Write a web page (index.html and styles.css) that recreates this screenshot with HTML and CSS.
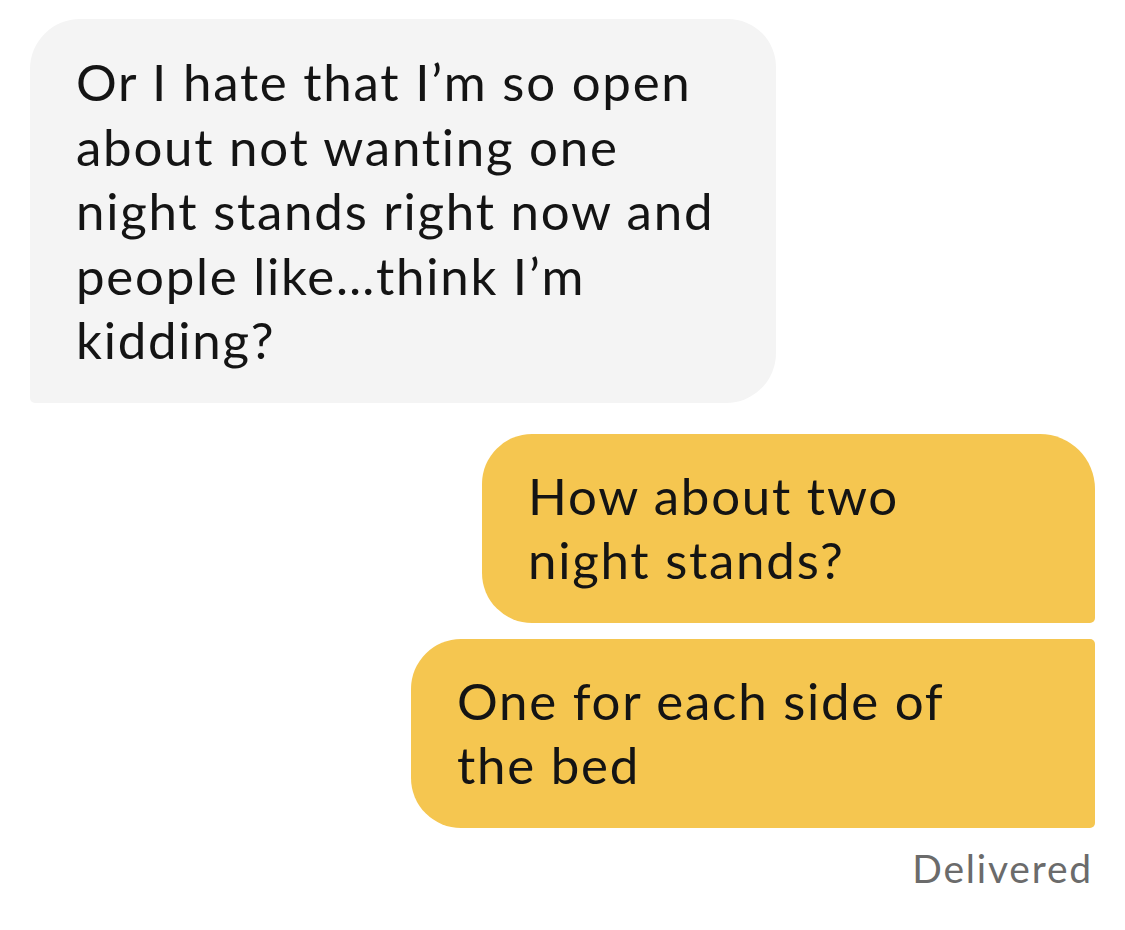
FILE: index.html
```html
<!DOCTYPE html>
<html>
<head>
<meta charset="utf-8">
<link rel="stylesheet" href="styles.css">
</head>
<body>
<div class="chat">
  <div class="bubble incoming">Or I hate that I’m so open<br>about not wanting one<br>night stands right now and<br>people like…think I’m<br>kidding?</div>
  <div class="bubble outgoing first">How about two<br>night stands?</div>
  <div class="bubble outgoing last">One for each side of<br>the bed</div>
  <div class="status">Delivered</div>
</div>
</body>
</html>
```
FILE: styles.css
```css
html, body {
  margin: 0;
  padding: 0;
  background: #ffffff;
}
.chat {
  display: flex;
  flex-direction: column;
  padding: 19px 30px 0 30px;
  font-family: "Lato", "Liberation Sans", sans-serif;
  font-variant-ligatures: none;
}
.bubble {
  font-size: 51px;
  line-height: 64.5px;
  letter-spacing: 1.75px;
  color: #141414;
  padding: 31px 20px 30px 46px;
  box-sizing: border-box;
}
.incoming {
  align-self: flex-start;
  width: 746px;
  background: #f4f4f4;
  border-radius: 50px 48px 50px 5px;
}
.outgoing {
  align-self: flex-end;
  background: #f5c650;
  padding-top: 30px;
}
.first {
  width: 613px;
  margin-top: 31px;
  border-radius: 50px 55px 5px 50px;
}
.last {
  width: 684px;
  margin-top: 16px;
  border-radius: 50px 5px 5px 50px;
}
.status {
  align-self: flex-end;
  margin-top: 17px;
  margin-right: 2px;
  font-size: 39px;
  line-height: 46px;
  letter-spacing: 1.8px;
  color: #6b6b6b;
}
```
